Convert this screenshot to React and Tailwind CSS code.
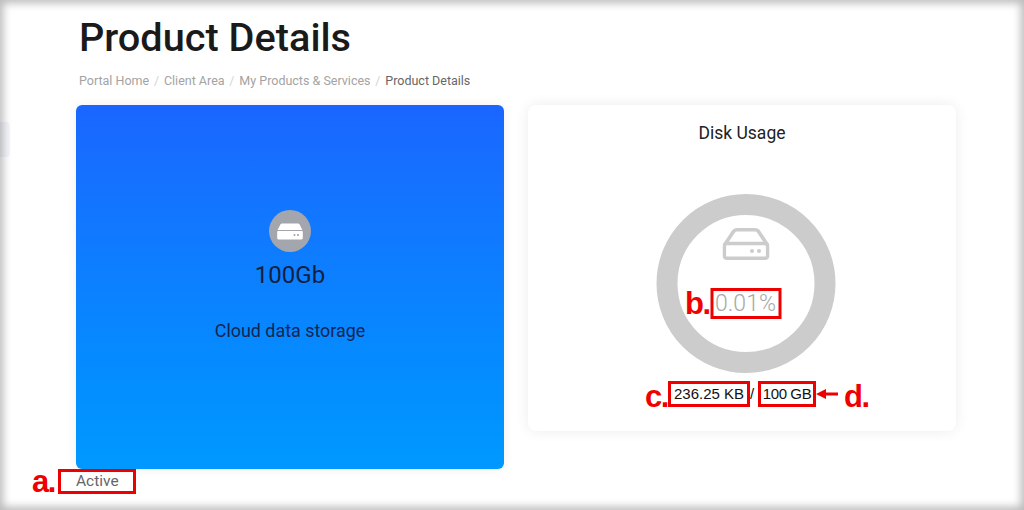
import React from 'react';

const DriveIcon = ({ className }) => (
	<svg className={className} viewBox="0 0 47 32" fill="none" stroke="currentColor" strokeWidth="3.6" strokeLinejoin="round">
		<path d="M2 17 L11 3.5 Q12.5 1.8 14.5 1.8 L32.5 1.8 Q34.5 1.8 36 3.5 L45 17" />
		<rect x="1.8" y="15.5" width="43.4" height="14.7" rx="2.5" />
		<circle cx="29.5" cy="23" r="2" fill="currentColor" stroke="none" />
		<circle cx="36.5" cy="23" r="2" fill="currentColor" stroke="none" />
	</svg>
);

const DriveSolid = ({ className }) => (
	<svg className={className} viewBox="0 0 26 17" fill="currentColor">
		<path d="M5 0.5 H21 Q22 0.5 22.6 1.5 L25.4 7 H0.6 L3.4 1.5 Q4 0.5 5 0.5 Z" />
		<path fillRule="evenodd" d="M1 8 H25 Q25.8 8 25.8 9 V15 Q25.8 16.5 24 16.5 H2 Q0.2 16.5 0.2 15 V9 Q0.2 8 1 8 Z M17.5 11 a1 1 0 1 0 0.01 0 Z M21 11 a1 1 0 1 0 0.01 0 Z" />
	</svg>
);

const Marker = ({ children, className }) => (
	<span className={`absolute font-['Liberation_Sans',sans-serif] font-bold text-[31px] leading-none tracking-[-1.5px] text-[#f00000] ${className}`}>{children}</span>
);

const App = () => {
	return (
		<div className="relative w-[1024px] h-[510px] overflow-hidden bg-white font-['Roboto',sans-serif]">
			<div className="absolute left-0 top-[122px] w-[10px] h-[35px] rounded-r bg-[#f4f6fb]"></div>

			<div className="pl-[76px] pt-[14px]">
				<h1 className="pl-[3px] text-[39.7px] leading-[47px] font-medium text-[#1a1a1a]">Product Details</h1>
				<ul className="flex items-center pl-[3px] mt-[11px] h-[18px] text-[12.5px] text-[#a3a3a3]">
					<li>Portal Home</li>
					<li className="px-[4.8px] text-[#d5d5d5]">/</li>
					<li>Client Area</li>
					<li className="px-[4.8px] text-[#d5d5d5]">/</li>
					<li>My Products &amp; Services</li>
					<li className="px-[4.8px] text-[#d5d5d5]">/</li>
					<li className="text-[#666]">Product Details</li>
				</ul>

				<div className="flex items-start gap-[24px] mt-[15px]">
					<div>
						<div className="flex flex-col items-center w-[428px] h-[364px] pt-[105px] rounded-md bg-gradient-to-b from-[#1a66ff] to-[#0099ff] shadow-[0_0_12px_rgba(0,0,0,0.06)]">
							<div className="flex items-center justify-center w-[42px] h-[42px] rounded-full bg-[#a3a6ad] text-white">
								<DriveSolid className="w-[26px] h-[17px]" />
							</div>
							<div className="mt-[6px] text-[24px] leading-[34px] text-[#12213f]">100Gb</div>
							<div className="mt-[27px] text-[17.9px] leading-[24px] text-[#12264f]">Cloud data storage</div>
						</div>
						<div className="relative -ml-[18px] flex items-center w-[78px] h-[25px] pl-[15px] border-[3px] border-[#ee0000] text-[15.5px] text-[#666]">
							Active
							<Marker className="-left-[29px] top-[-6px]">a.</Marker>
						</div>
					</div>

					<div className="flex flex-col items-center w-[428px] h-[326px] pt-[18px] rounded-lg bg-white shadow-[0_0_14px_rgba(0,0,0,0.08)]">
						<div className="text-[17.5px] leading-[20px] text-[#222]">Disk Usage</div>
						<div className="relative flex flex-col items-center w-[179px] h-[179px] mt-[51px] pt-[13px] rounded-full border-[21px] border-[#cccccc] translate-x-[3.5px]">
							<DriveIcon className="w-[47px] h-[32px] text-[#cccccc]" />
							<div className="relative flex items-center justify-center w-[71px] h-[31px] mt-[28px] pt-[2px] border-[3px] border-[#ee0000] text-[23px] font-light text-[#a8a8a8]">
								0.01%
								<Marker className="-left-[28px] top-[-3px]">b.</Marker>
							</div>
						</div>
						<div className="flex items-center mt-[8px] font-['Liberation_Sans',sans-serif] text-[15px] text-[#111]">
							<div className="relative flex items-center justify-center w-[82px] h-[26px] border-[3px] border-[#ee0000] whitespace-nowrap">
								236.25 KB
								<Marker className="-left-[26px] top-[-3px]">c.</Marker>
							</div>
							<span className="w-[8px] text-center -translate-x-[2px]">/</span>
							<div className="relative flex items-center justify-center w-[58px] h-[26px] border-[3px] border-[#ee0000] whitespace-nowrap">
								<span className="tracking-[-0.4px]">100 GB</span>
								<svg className="absolute -right-[25px] top-[3px] w-[22px] h-[14px]" viewBox="0 0 22 14" fill="#ee0000">
									<path d="M0 7 L10 2 V5.5 H22 V8.5 H10 V12 Z" />
								</svg>
								<Marker className="left-[83px] top-[-3px]">d.</Marker>
							</div>
						</div>
					</div>
				</div>
			</div>

			<div className="absolute inset-0 pointer-events-none shadow-[inset_0_0_8px_3px_rgba(0,0,0,0.28)]"></div>
		</div>
	);
};

export default App;
